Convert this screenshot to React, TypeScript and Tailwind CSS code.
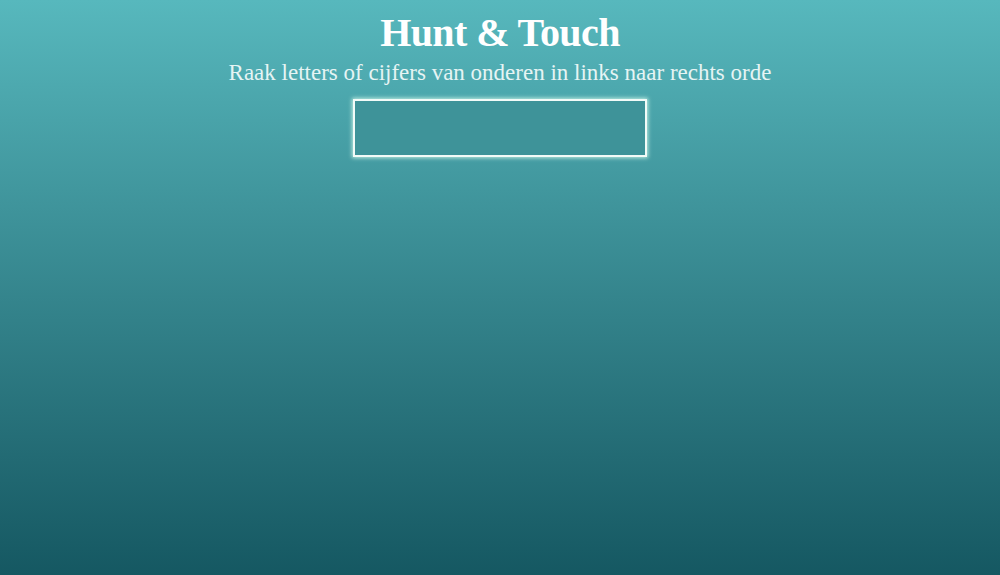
export default function App() {
  return (
    <div
      className="w-[1000px] h-[575px] flex flex-col items-center bg-gradient-to-b from-[#57b8bd] to-[#155862] text-white"
      style={{ fontFamily: '"Liberation Serif", "DejaVu Serif", serif' }}
    >
      <h1 className="mt-[9px] text-[40px] leading-[48px] font-bold tracking-[-0.6px]">Hunt &amp; Touch</h1>
      <p className="mt-[1px] text-[23px] leading-[30px] text-[#e6f4f4]">
        Raak letters of cijfers van onderen in links naar rechts orde
      </p>
      <div className="mt-[11px] w-[294px] h-[58px] bg-[#3e9399] border-2 border-[#f2fbf8] shadow-[0_0_4px_1px_rgba(220,255,240,0.8)]" />
    </div>
  );
}
